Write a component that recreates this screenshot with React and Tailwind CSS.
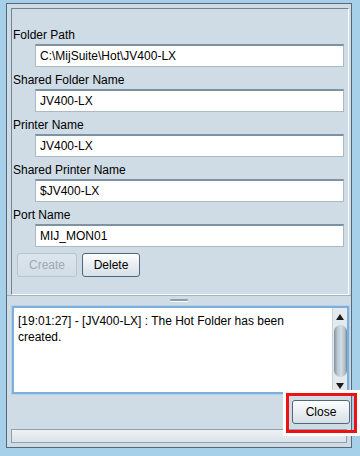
import React from 'react';

const Field = ({ label, value, first }) => (
  <div className={first ? '' : 'mt-[5px]'}>
    <div className="h-4 leading-4 text-black">{label}</div>
    <div className="mt-[1px] ml-[22px] mr-[4px] h-[23px] bg-white border border-[#abb9c3] border-t-[#7d93a3] border-t-2 pl-[4px] flex items-center leading-4">
      {value}
    </div>
  </div>
);

const ScrollBar = () => (
  <div className="w-[15px] h-full bg-[#e4e9ed] border-l border-[#c9d3da] flex flex-col items-center">
    <div className="h-[17px] w-full flex items-center justify-center">
      <svg width="8" height="6" viewBox="0 0 8 6">
        <path d="M4 0 L8 6 L0 6 Z" fill="#1c1c1c" />
      </svg>
    </div>
    <div className="flex-1 w-[13px] py-[0px]">
      <div className="h-[52px] w-full rounded-[7px] bg-[linear-gradient(to_right,#7f909c,#b7c5cf_25%,#d2dde4_55%,#aebcc6_85%,#6f828f)]" />
    </div>
    <div className="h-[12px] w-full flex items-center justify-center">
      <svg width="8" height="6" viewBox="0 0 8 6">
        <path d="M0 0 L8 0 L4 6 Z" fill="#1c1c1c" />
      </svg>
    </div>
  </div>
);

export default function App() {
  return (
    <div
      className="relative w-[360px] h-[456px] overflow-hidden bg-[#a6cfe9] pt-[3px] pl-[6px] pr-[8px] pb-[8px] text-[12px] text-black"
      style={{ fontFamily: '"Liberation Sans", Arial, sans-serif' }}
    >
      <div className="h-full border border-[#55697a] bg-[#cfdce5] flex flex-col pt-[4px]">
        {/* settings panel */}
        <div className="ml-[4px] mr-[2px] h-[287px] border border-t-[#6f8596] border-l-[#6f8596] border-b-white border-r-white pt-[18px] pl-[1px]">
          <Field first label="Folder Path" value="C:\MijSuite\Hot\JV400-LX" />
          <Field label="Shared Folder Name" value="JV400-LX" />
          <Field label="Printer Name" value="JV400-LX" />
          <Field label="Shared Printer Name" value="$JV400-LX" />
          <Field label="Port Name" value="MIJ_MON01" />
          <div className="mt-[6px] ml-[4px] flex gap-[5px]">
            <button className="w-[60px] h-[24px] rounded-[3px] border border-[#b5c4ce] bg-[linear-gradient(to_bottom,#dce5eb,#d2dde5)] text-[#9babb7]">
              Create
            </button>
            <button className="w-[58px] h-[24px] rounded-[3px] border border-[#52677a] bg-[linear-gradient(to_bottom,#fdfefe,#e9eef2_50%,#d7e0e7)] text-black">
              Delete
            </button>
          </div>
        </div>

        {/* splitter */}
        <div className="h-[10px] border-t border-[#a3b3bf] flex items-start justify-center pt-[3px]">
          <div className="w-[18px] h-[2px] rounded-full bg-[#8a9eb0] shadow-[0_1px_0_#ffffff]" />
        </div>

        {/* log */}
        <div className="ml-[4px] mr-[1px] h-[90px] border border-[#b2d2ea]">
          <div className="h-full border-2 border-[#7fafd9] bg-white flex">
            <div className="flex-1 pl-[4px] pt-[5px] leading-4">
              [19:01:27] - [JV400-LX] : The Hot Folder has been
              <br />
              created.
            </div>
            <ScrollBar />
          </div>
        </div>

        {/* buttons + status */}
        <div className="mt-[5px] mr-[1px] flex justify-end">
          <button className="w-[58px] h-[24px] rounded-[3px] border border-[#52677a] bg-[linear-gradient(to_bottom,#fdfefe,#e9eef2_50%,#d7e0e7)] text-black">
            Close
          </button>
        </div>
        <div className="mt-[5px] ml-[4px] mr-[4px] h-[14px] border border-[#8fa0ab] bg-[linear-gradient(to_bottom,#eef2f5,#dbe3e9)]" />
      </div>

      {/* annotation */}
      <div className="absolute left-[283px] top-[390px] w-[77px] h-[46px] border-[3px] border-white">
        <div className="w-full h-full border-[3px] border-[#ee1111]" />
      </div>
    </div>
  );
}
